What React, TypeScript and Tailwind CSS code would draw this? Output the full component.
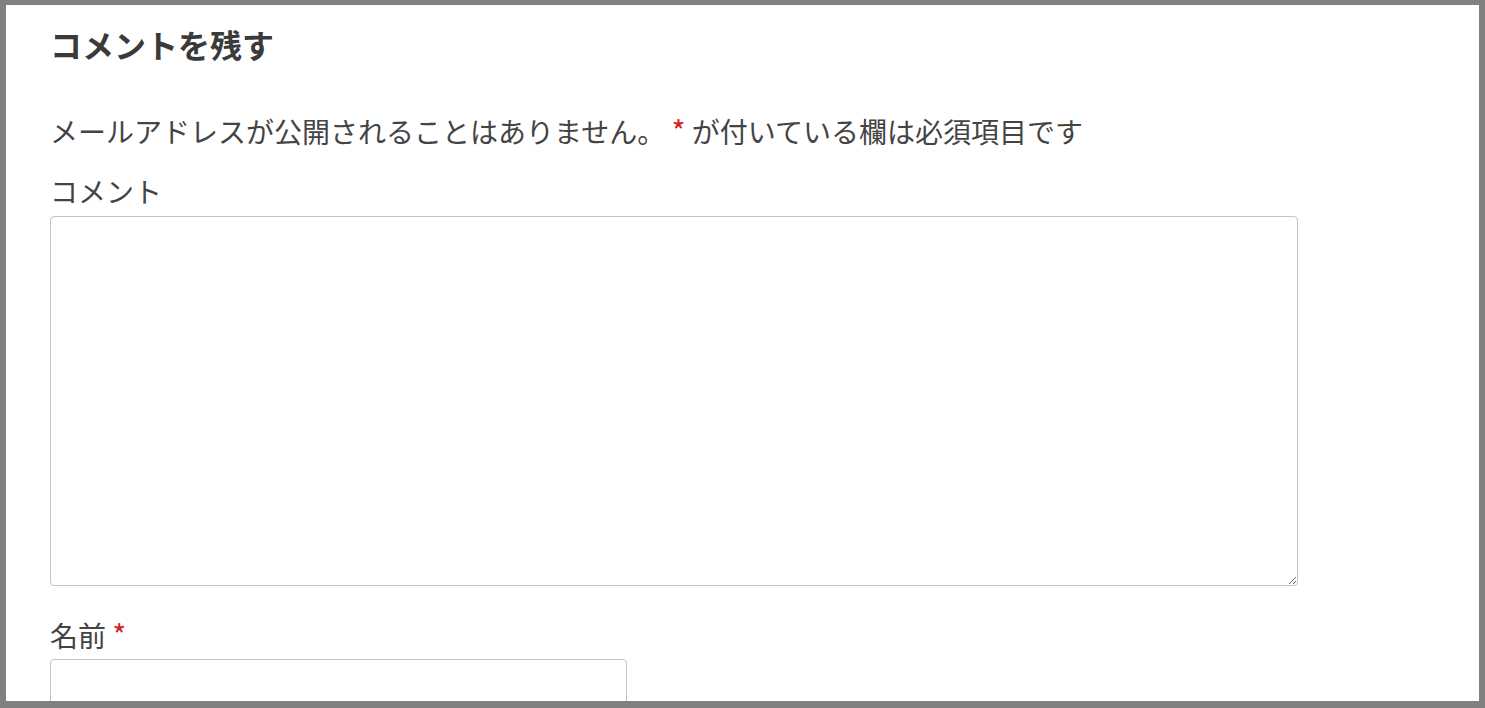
import React from "react";

const App: React.FC = () => {
  return (
    <div
      className="h-[708px] w-full overflow-hidden bg-white border-solid border-[#808080] border-t-[5px] border-l-[6px] border-r-[6px] border-b-[7px]"
      style={{ fontFamily: '"Noto Sans CJK JP", "Noto Sans", sans-serif' }}
    >
      <div className="px-[44px] pt-[19px] text-[#444]">
        {/* Heading */}
        <h3 className="text-[32px] leading-[40px] font-bold text-[#3a3a3a]">
          コメントを残す
        </h3>

        <form onSubmit={(e) => e.preventDefault()}>
          <p className="mt-[46px] text-[28px] leading-[40px]">
            メールアドレスが公開されることはありません。{" "}
            <span className="text-[30px] text-[#d62222]">*</span> が付いている欄は必須項目です
          </p>

          {/* Comment */}
          <div className="mt-[20px]">
            <label
              htmlFor="comment"
              className="block text-[28px] leading-[40px]"
            >
              コメント
            </label>
            <textarea
              id="comment"
              className="mt-[5px] block h-[370px] w-[1248px] rounded-[4px] border border-[#c4c4c4] bg-white outline-none"
            />
          </div>

          {/* Name */}
          <div className="mt-[28px]">
            <label
              htmlFor="author"
              className="block text-[28px] leading-[40px]"
            >
              名前 <span className="text-[30px] text-[#d62222]">*</span>
            </label>
            <input
              id="author"
              type="text"
              className="mt-[4px] block h-[52px] w-[577px] rounded-[4px] border border-[#c4c4c4] bg-white outline-none"
            />
          </div>
        </form>
      </div>
    </div>
  );
};

export default App;
